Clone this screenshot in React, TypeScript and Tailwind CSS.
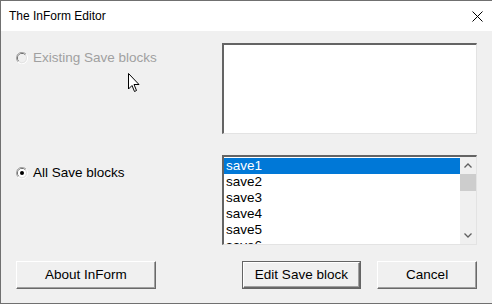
import React from "react";

const font = { fontFamily: '"Liberation Sans", Arial, sans-serif' };

function Radio({ checked, disabled }: { checked?: boolean; disabled?: boolean }) {
  return (
    <svg width="12" height="12" viewBox="0 0 12 12" className="shrink-0">
      <path d="M10.2 2.2 A5.5 5.5 0 0 0 0.5 6 A5.5 5.5 0 0 0 2 9.8" fill="none" stroke="#a0a0a0" strokeWidth="1" />
      <path d="M9.4 3 A4.5 4.5 0 0 0 1.5 6 A4.5 4.5 0 0 0 2.8 9" fill="none" stroke="#696969" strokeWidth="1" />
      <circle cx="6" cy="6" r="4" fill={disabled ? "#f0f0f0" : "#fff"} />
      <path d="M2 10.2 A5.5 5.5 0 0 0 11.5 6 A5.5 5.5 0 0 0 10.2 2.2" fill="none" stroke="#fff" strokeWidth="1" />
      <path d="M2.8 9.4 A4.5 4.5 0 0 0 10.5 6 A4.5 4.5 0 0 0 9.4 2.8" fill="none" stroke="#e3e3e3" strokeWidth="1" />
      {checked && <circle cx="6" cy="6" r="2" fill="#000" />}
    </svg>
  );
}

function Btn({ label, width, isDefault }: { label: string; width: string; isDefault?: boolean }) {
  return (
    <div className={`${width} h-[28px] ${isDefault ? "border border-[#646464]" : ""}`}>
      <div className="h-full w-full border-t border-l border-t-white border-l-white border-b border-r border-b-[#696969] border-r-[#696969] shadow-[inset_-1px_-1px_0_#a0a0a0] bg-[#f0f0f0] flex items-center justify-center text-[13.5px] text-black">
        {label}
      </div>
    </div>
  );
}

const saves = ["save1", "save2", "save3", "save4", "save5", "save6"];

export default function App() {
  return (
    <div className="relative w-[492px] h-[304px] flex flex-col border-l border-t border-b border-[#707070] bg-[#f0f0f0] overflow-hidden" style={font}>
      {/* Title bar */}
      <div className="h-[30px] bg-white flex items-center justify-between pl-[8px] pr-[9px] shrink-0">
        <span className="text-[12px] text-black">The InForm Editor</span>
        <svg width="11" height="11" viewBox="0 0 11 11">
          <path d="M0.5 0.5 L10.5 10.5 M10.5 0.5 L0.5 10.5" stroke="#000" strokeWidth="1" />
        </svg>
      </div>

      {/* Body */}
      <div className="flex-1 flex flex-col pt-[12px] pl-[15px] pr-[15px]">
        <div className="flex">
          <div className="w-[206px] pt-[5px]">
            <div className="flex items-center gap-[5px] text-[13.5px] text-[#a0a0a0]">
              <Radio disabled />
              <span>Existing Save blocks</span>
            </div>
          </div>
          <div className="w-[255px] h-[91px] bg-white border-t-2 border-l-2 border-t-[#646464] border-l-[#646464] border-b border-r border-b-[#e3e3e3] border-r-[#e3e3e3]" />
        </div>

        <div className="flex mt-[21px]">
          <div className="w-[206px] pt-[8px]">
            <div className="flex items-center gap-[5px] text-[13.5px] text-black">
              <Radio checked />
              <span>All Save blocks</span>
            </div>
          </div>
          <div className="w-[255px] h-[90px] bg-white border-t-2 border-l-2 border-t-[#646464] border-l-[#646464] border-b border-r border-b-[#e3e3e3] border-r-[#e3e3e3] flex overflow-hidden">
            <div className="flex-1 pt-[1px] text-[13.5px] leading-[16px]">
              {saves.map((s, i) => (
                <div key={s} className={`h-[16px] pl-[2px] ${i === 0 ? "bg-[#0078d7] text-white" : "text-black"}`}>
                  {s}
                </div>
              ))}
            </div>
            <div className="w-[16px] bg-[#f0f0f0] flex flex-col">
              <div className="h-[17px] flex items-center justify-center">
                <svg width="8" height="5" viewBox="0 0 8 5">
                  <path d="M0.5 4.5 L4 1 L7.5 4.5" fill="none" stroke="#606060" strokeWidth="1.3" />
                </svg>
              </div>
              <div className="h-[17px] bg-[#cdcdcd]" />
              <div className="flex-1" />
              <div className="h-[17px] flex items-center justify-center">
                <svg width="8" height="5" viewBox="0 0 8 5">
                  <path d="M0.5 0.5 L4 4 L7.5 0.5" fill="none" stroke="#606060" strokeWidth="1.3" />
                </svg>
              </div>
            </div>
          </div>
        </div>

        <div className="flex mt-[16px]">
          <Btn label="About InForm" width="w-[140px]" />
          <div className="w-[86px]" />
          <Btn label="Edit Save block" width="w-[120px]" isDefault />
          <div className="w-[16px]" />
          <Btn label="Cancel" width="w-[100px]" />
        </div>
      </div>

      {/* Mouse pointer */}
      <svg className="absolute left-[127px] top-[72px]" width="13" height="20" viewBox="0 0 13 20">
        <path d="M0.5 0.5 L0.5 16 L4 12.5 L6.5 18.5 L8.5 17.5 L6 11.5 L11 11.5 Z" fill="#fff" stroke="#000" strokeWidth="1" strokeLinejoin="round" />
      </svg>
    </div>
  );
}
